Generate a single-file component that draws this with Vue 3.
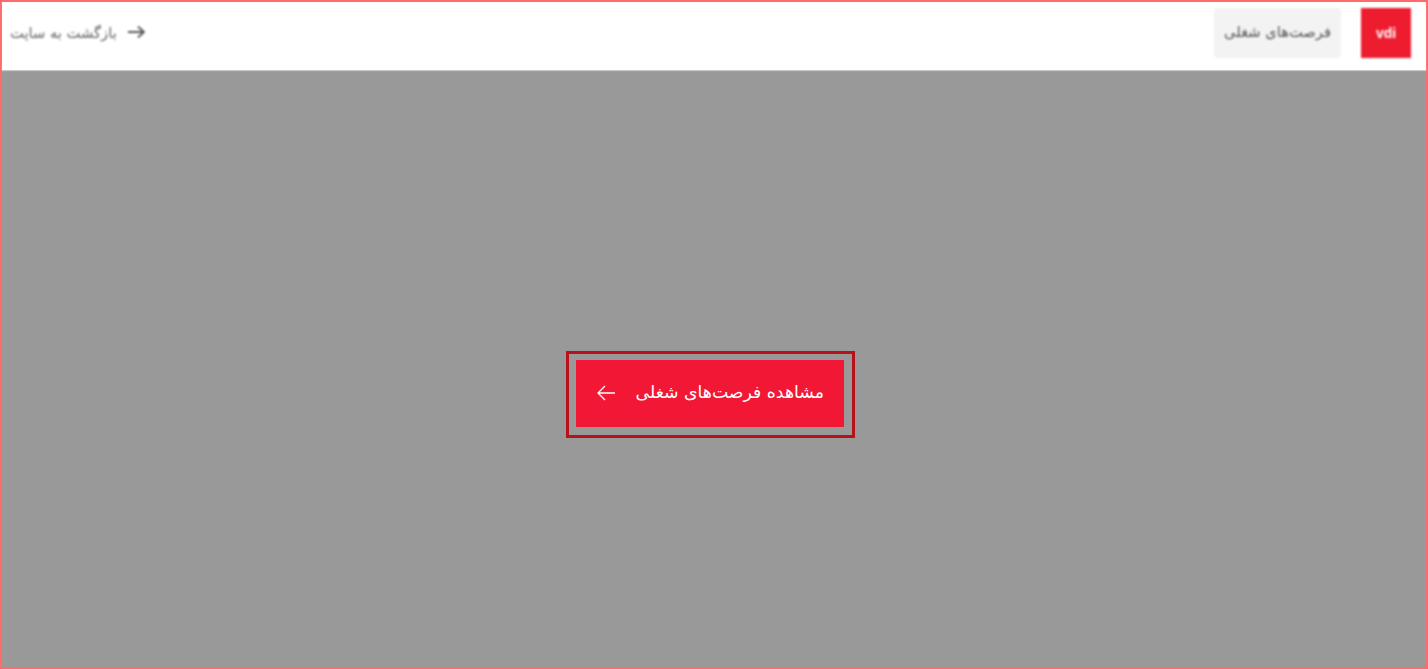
<script setup>
</script>

<template>
  <div class="page" dir="rtl">
    <header class="topbar">
      <div class="start">
        <div class="logo">vdi</div>
        <a class="chip">فرصت‌های شغلی</a>
      </div>
      <a class="back">
        <svg class="back-icon" width="18" height="14" viewBox="0 0 18 14" fill="none" stroke="#555" stroke-width="1.8">
          <path d="M1 7h16M11 1.5 17 7l-6 5.5" />
        </svg>
        <span>بازگشت به سایت</span>
      </a>
    </header>
    <main class="stage">
      <div class="focus-ring">
        <button class="cta">
          <span class="cta-label">مشاهده فرصت‌های شغلی</span>
          <svg width="18" height="16" viewBox="0 0 18 16" fill="none" stroke="#fff" stroke-width="1.3">
            <path d="M18 8H1M8 1 1 8l7 7" />
          </svg>
        </button>
      </div>
    </main>
  </div>
</template>

<style scoped>
.page {
  box-sizing: border-box;
  width: 100%;
  height: 669px;
  border: 2px solid #ff6b6b;
  display: flex;
  flex-direction: column;
  background: #999;
  font-family: "DejaVu Sans", "Noto Sans", sans-serif;
}
.topbar {
  flex: 0 0 68px;
  box-sizing: border-box;
  background: #fff;
  box-shadow: 0 1px 1px rgba(255, 255, 255, 0.45);
  display: flex;
  justify-content: space-between;
  align-items: flex-start;
  padding: 6px 15px 0 8px;
}
.start {
  display: flex;
  align-items: center;
  gap: 20px;
  filter: blur(1.3px);
}
.logo {
  width: 50px;
  height: 50px;
  background: #ed1c2e;
  color: #fff;
  font: 700 14px/50px "Liberation Sans", sans-serif;
  text-align: center;
}
.chip {
  width: 127px;
  height: 50px;
  box-sizing: border-box;
  background: #f3f3f3;
  border-radius: 4px;
  color: #555;
  font-size: 14.7px;
  line-height: 48px;
  text-align: center;
  white-space: nowrap;
}
.back {
  display: flex;
  align-items: center;
  gap: 10px;
  height: 48px;
  color: #666;
  font-size: 14.7px;
  white-space: nowrap;
  filter: blur(1.3px);
}
.back-icon {
  flex: none;
}
.stage {
  flex: 1;
  display: flex;
  align-items: center;
  justify-content: center;
  padding: 52px 7px 0 0;
}
.focus-ring {
  border: 3px solid #b71219;
  padding: 6px 8px 8px 7px;
  display: flex;
}
.cta {
  width: 268px;
  height: 67px;
  border: 0;
  background: #f31736;
  color: #fff;
  font-family: inherit;
  font-size: 17.3px;
  display: flex;
  align-items: center;
  justify-content: space-between;
  padding: 0 20px 2px 21px;
  white-space: nowrap;
}
.cta-label {
  padding-bottom: 2px;
}
</style>
